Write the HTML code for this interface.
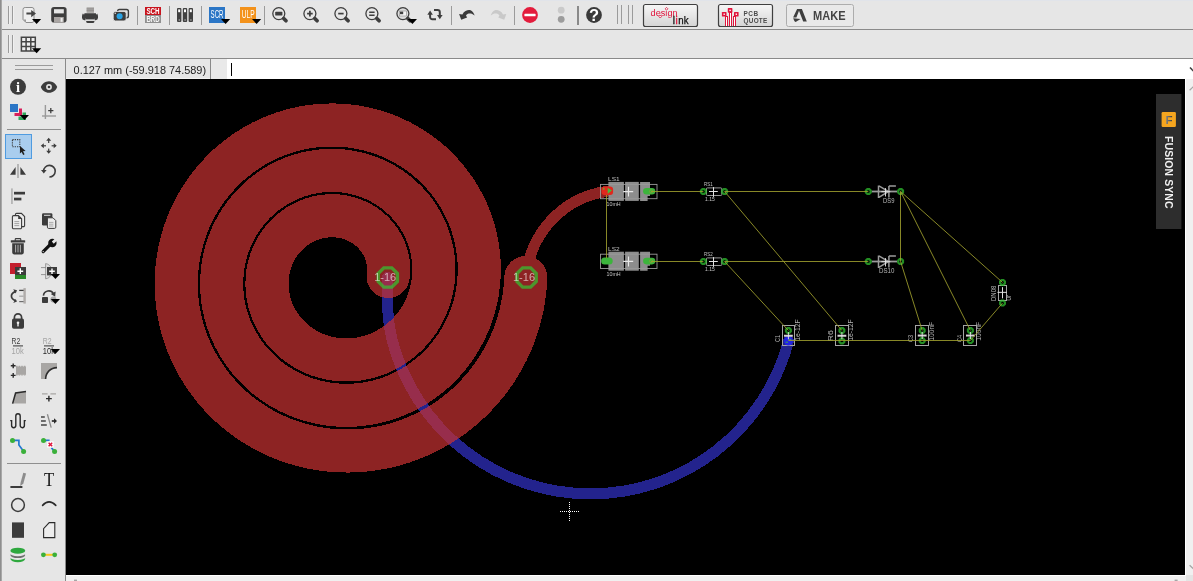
<!DOCTYPE html>
<html><head><meta charset="utf-8"><title>EAGLE Board</title>
<style>
html,body{margin:0;padding:0;}
body{width:1193px;height:581px;overflow:hidden;background:#e6e6e6;position:relative;font-family:"Liberation Sans",sans-serif;}
svg{position:absolute;left:0;top:0;}
text{font-family:"Liberation Sans",sans-serif;}
</style></head><body>
<svg width="1193" height="581" viewBox="0 0 1193 581">
<rect x="66" y="79" width="1119" height="496" fill="#000"/>
<g id="board" filter="url(#nolcd)">
<path d="M387.5,277.5 L387.5,300 C387.5,318 389.5,329.3 392.2,340 A204.7,204.7 0 0 0 788.5,341" fill="none" stroke="#23238d" stroke-width="11" stroke-linecap="round" stroke-linejoin="round" shape-rendering="crispEdges"/>
<g opacity="0.706" shape-rendering="crispEdges"><path d="M388.1,276.5 L388.4,273.9 L388.6,271.3 L388.6,268.7 L388.5,266.0 L388.3,263.3 L387.9,260.7 L387.3,258.0 L386.6,255.3 L385.8,252.7 L384.8,250.1 L383.7,247.5 L382.4,245.0 L381.0,242.6 L379.5,240.2 L377.8,237.8 L375.9,235.6 L374.0,233.4 L371.9,231.3 L369.7,229.4 L367.4,227.5 L365.0,225.7 L362.4,224.1 L359.8,222.6 L357.1,221.2 L354.2,220.0 L351.3,218.9 L348.4,218.0 L345.3,217.2 L342.2,216.6 L339.1,216.1 L335.9,215.8 L332.7,215.7 L329.5,215.7 L326.2,216.0 L323.0,216.4 L319.7,216.9 L316.5,217.7 L313.3,218.6 L310.1,219.7 L307.0,220.9 L303.9,222.4 L300.9,224.0 L298.0,225.7 L295.1,227.7 L292.4,229.8 L289.7,232.0 L287.2,234.4 L284.7,237.0 L282.4,239.7 L280.2,242.5 L278.2,245.5 L276.3,248.6 L274.6,251.7 L273.0,255.0 L271.6,258.4 L270.4,261.9 L269.4,265.5 L268.5,269.1 L267.8,272.8 L267.4,276.5 L267.1,280.3 L267.0,284.1 L267.1,287.9 L267.4,291.7 L268.0,295.6 L268.7,299.4 L269.6,303.2 L270.8,306.9 L272.1,310.6 L273.7,314.3 L275.4,317.8 L277.4,321.3 L279.5,324.8 L281.8,328.1 L284.3,331.3 L287.0,334.3 L289.9,337.3 L292.9,340.1 L296.1,342.7 L299.4,345.2 L302.9,347.5 L306.5,349.7 L310.3,351.6 L314.1,353.4 L318.1,355.0 L322.1,356.3 L326.3,357.5 L330.5,358.4 L334.8,359.1 L339.1,359.6 L343.5,359.9 L347.9,359.9 L352.3,359.7 L356.7,359.3 L361.1,358.6 L365.5,357.7 L369.8,356.6 L374.1,355.2 L378.4,353.6 L382.6,351.8 L386.6,349.7 L390.6,347.4 L394.5,344.9 L398.3,342.2 L401.9,339.3 L405.4,336.2 L408.7,332.9 L411.9,329.4 L414.9,325.7 L417.7,321.9 L420.3,317.9 L422.7,313.7 L424.8,309.4 L426.8,305.0 L428.5,300.5 L430.1,295.8 L431.3,291.1 L432.3,286.3 L433.1,281.4 L433.6,276.5 L433.8,271.5 L433.8,266.5 L433.6,261.5 L433.0,256.5 L432.2,251.6 L431.1,246.6 L429.8,241.7 L428.2,236.8 L426.3,232.0 L424.2,227.4 L421.9,222.8 L419.2,218.3 L416.4,213.9 L413.3,209.7 L409.9,205.7 L406.4,201.8 L402.6,198.1 L398.7,194.5 L394.5,191.2 L390.1,188.1 L385.6,185.2 L380.9,182.5 L376.1,180.1 L371.1,178.0 L366.0,176.1 L360.8,174.4 L355.5,173.1 L350.1,172.0 L344.6,171.1 L339.1,170.6 L333.5,170.4 L328.0,170.5 L322.4,170.8 L316.8,171.5 L311.2,172.4 L305.7,173.6 L300.2,175.2 L294.8,177.0 L289.5,179.1 L284.3,181.5 L279.2,184.2 L274.2,187.2 L269.4,190.4 L264.7,193.9 L260.2,197.6 L255.9,201.6 L251.8,205.8 L247.9,210.3 L244.3,214.9 L240.8,219.8 L237.7,224.8 L234.8,230.0 L232.1,235.4 L229.8,241.0 L227.7,246.6 L225.9,252.4 L224.4,258.3 L223.2,264.3 L222.4,270.4 L221.9,276.5 L221.6,282.7 L221.7,288.8 L222.2,295.0 L222.9,301.2 L224.0,307.3 L225.4,313.4 L227.2,319.5 L229.2,325.4 L231.6,331.3 L234.3,337.0 L237.3,342.6 L240.6,348.1 L244.1,353.4 L248.0,358.5 L252.2,363.4 L256.6,368.1 L261.3,372.6 L266.2,376.9 L271.3,380.9 L276.7,384.6 L282.3,388.1 L288.0,391.2 L294.0,394.1 L300.1,396.7 L306.3,398.9 L312.7,400.8 L319.2,402.4 L325.7,403.7 L332.4,404.6 L339.1,405.1 L345.9,405.3 L352.6,405.2 L359.4,404.7 L366.2,403.8 L372.9,402.6 L379.6,401.0 L386.1,399.1 L392.7,396.8 L399.0,394.1 L405.3,391.2 L411.4,387.9 L417.4,384.2 L423.1,380.3 L428.7,376.0 L434.1,371.5 L439.2,366.6 L444.1,361.5 L448.7,356.1 L453.0,350.5 L457.1,344.6 L460.8,338.5 L464.2,332.2 L467.3,325.7 L470.1,319.1 L472.5,312.2 L474.6,305.3 L476.3,298.2 L477.6,291.1 L478.5,283.8 L479.1,276.5 L479.3,269.2 L479.1,261.8 L478.5,254.4 L477.5,247.1 L476.2,239.8 L474.4,232.5 L472.3,225.4 L469.8,218.3 L466.9,211.4 L463.6,204.6 L460.0,198.0 L456.0,191.5 L451.7,185.3 L447.1,179.3 L442.1,173.5 L436.8,168.0 L431.3,162.7 L425.4,157.7 L419.3,153.0 L412.9,148.7 L406.3,144.7 L399.4,141.0 L392.4,137.7 L385.2,134.7 L377.8,132.1 L370.3,129.9 L362.6,128.1 L354.8,126.7 L347.0,125.7 L339.1,125.1 L331.2,125.0 L323.2,125.2 L315.2,125.9 L307.3,126.9 L299.4,128.5 L291.6,130.4 L283.9,132.7 L276.3,135.4 L268.8,138.6 L261.5,142.1 L254.4,146.0 L247.4,150.4 L240.7,155.0 L234.3,160.1 L228.0,165.4 L222.1,171.2 L216.5,177.2 L211.1,183.5 L206.1,190.1 L201.4,197.0 L197.1,204.2 L193.2,211.5 L189.6,219.1 L186.5,226.9 L183.7,234.9 L181.4,243.0 L179.5,251.2 L178.0,259.6 L177.0,268.0 L176.4,276.5 L176.2,285.0 L176.5,293.6 L177.2,302.1 L178.4,310.7 L180.1,319.1 L182.2,327.5 L184.7,335.8 L187.6,343.9 L191.0,351.9 L194.9,359.8 L199.1,367.4 L203.8,374.8 L208.8,382.0 L214.2,389.0 L220.0,395.6 L226.1,402.0 L232.6,408.0 L239.4,413.7 L246.5,419.0 L253.9,424.0 L261.6,428.6 L269.5,432.8 L277.7,436.6 L286.1,440.0 L294.6,442.9 L303.3,445.4 L312.2,447.5 L321.1,449.1 L330.2,450.2 L339.3,450.8 L348.5,451.0 L357.7,450.7 L366.9,449.9 L376.0,448.6 L385.1,446.9 L394.1,444.7 L403.0,442.0 L411.7,438.8 L420.3,435.2 L428.7,431.1 L436.9,426.6 L444.9,421.7 L452.6,416.3 L460.0,410.5 L467.1,404.4 L473.9,397.8 L480.4,390.9 L486.5,383.7 L492.2,376.1 L497.5,368.2 L502.4,360.0 L506.9,351.6 L510.9,343.0 L514.5,334.1 L517.6,325.0 L520.2,315.7 L522.4,306.3 L524.0,296.8 L525.2,287.2 L525.8,277.5" fill="none" stroke="#c83232" stroke-width="43.1" stroke-linecap="round" stroke-linejoin="round"/>
<path d="M526.3,277.5 A94,94 0 0 1 606.6,191.4" fill="none" stroke="#c83232" stroke-width="11" stroke-linecap="round"/></g>
<polygon points="397.40,281.48 391.78,287.10 383.82,287.10 378.20,281.48 378.20,273.52 383.82,267.90 391.78,267.90 397.40,273.52" fill="none" stroke="#32c832" stroke-opacity="0.706" stroke-width="3.4"/>
<text x="385.2" y="281.3" font-size="11.6" text-anchor="middle" textLength="22" lengthAdjust="spacingAndGlyphs" fill="#ffffff" fill-opacity="0.6">1-16</text>
<polygon points="536.20,281.48 530.58,287.10 522.62,287.10 517.00,281.48 517.00,273.52 522.62,267.90 530.58,267.90 536.20,273.52" fill="none" stroke="#32c832" stroke-opacity="0.706" stroke-width="3.4"/>
<text x="524.0" y="281.3" font-size="11.6" text-anchor="middle" textLength="22" lengthAdjust="spacingAndGlyphs" fill="#ffffff" fill-opacity="0.6">1-16</text>
<rect x="608.4" y="181.9" width="15.5" height="19" fill="#8d8d8d"/><rect x="625.1" y="181.9" width="13.7" height="19" fill="#8d8d8d"/><path d="M640.1,181.9 h9.9 v14 h-2.4 v5 h-7.5z" fill="#8d8d8d"/><rect x="600.5" y="184.4" width="56.5" height="14.3" fill="none" stroke="#9a9a9a" stroke-width="0.9"/><path d="M623.2,191.6 h10 M628.5,186.8 v9.8" stroke="#e8e8e8" stroke-width="1.1" fill="none"/><rect x="601.5" y="186.4" width="11.6" height="8.6" rx="3" fill="#e0281e"/><path d="M607.7,187.8 l4.2,2.8 l-4.2,3.2z" fill="#46b83c"/><rect x="602.9" y="187.8" width="1.6" height="2" fill="#7a9a2a"/><rect x="643.1" y="188.0" width="12.2" height="6.6" rx="3.3" fill="#3cb43c"/><circle cx="651.1" cy="191.4" r="1.6" fill="none" stroke="#8aa03a" stroke-width="0.7"/><text x="608.1" y="180.70000000000002" font-size="5.6" fill="#c0c0c0" textLength="11.6" lengthAdjust="spacingAndGlyphs">LS1</text><text x="606.5" y="206.4" font-size="5.4" fill="#c0c0c0" textLength="14.2" lengthAdjust="spacingAndGlyphs">10mH</text>
<rect x="608.4" y="251.7" width="15.5" height="19" fill="#8d8d8d"/><rect x="625.1" y="251.7" width="13.7" height="19" fill="#8d8d8d"/><path d="M640.1,251.7 h9.9 v14 h-2.4 v5 h-7.5z" fill="#8d8d8d"/><rect x="600.5" y="254.2" width="56.5" height="14.3" fill="none" stroke="#9a9a9a" stroke-width="0.9"/><path d="M623.2,261.4 h10 M628.5,256.59999999999997 v9.8" stroke="#e8e8e8" stroke-width="1.1" fill="none"/><rect x="601.1" y="257.59999999999997" width="11.6" height="7" rx="3.5" fill="#3cb43c"/><rect x="643.1" y="257.8" width="12.2" height="6.6" rx="3.3" fill="#3cb43c"/><circle cx="651.1" cy="261.2" r="1.6" fill="none" stroke="#8aa03a" stroke-width="0.7"/><text x="608.1" y="250.5" font-size="5.6" fill="#c0c0c0" textLength="11.6" lengthAdjust="spacingAndGlyphs">LS2</text><text x="606.5" y="276.2" font-size="5.4" fill="#c0c0c0" textLength="14.2" lengthAdjust="spacingAndGlyphs">10mH</text>
<rect x="706.4" y="187.9" width="15.400000000000045" height="7.6" rx="1" fill="none" stroke="#a8a8a8" stroke-width="0.9"/><path d="M709.0,191.5 h8.8 M713.5,187.1 v9.8" stroke="#e0e0e0" stroke-width="1" fill="none"/><polygon points="705.80,192.49 704.39,193.90 702.41,193.90 701.00,192.49 701.00,190.51 702.41,189.10 704.39,189.10 705.80,190.51" fill="none" stroke="#32c832" stroke-opacity="0.706" stroke-width="2.2"/><polygon points="727.00,192.49 725.59,193.90 723.61,193.90 722.20,192.49 722.20,190.51 723.61,189.10 725.59,189.10 727.00,190.51" fill="none" stroke="#32c832" stroke-opacity="0.706" stroke-width="2.2"/><text x="704.0" y="185.9" font-size="5.2" fill="#c4c4c4" textLength="8.6" lengthAdjust="spacingAndGlyphs">RS1</text><text x="705.0" y="201.2" font-size="5.2" fill="#c4c4c4" textLength="9.8" lengthAdjust="spacingAndGlyphs">1.15</text>
<rect x="706.4" y="257.9" width="15.400000000000045" height="7.6" rx="1" fill="none" stroke="#a8a8a8" stroke-width="0.9"/><path d="M709.0,261.5 h8.8 M713.5,257.1 v9.8" stroke="#e0e0e0" stroke-width="1" fill="none"/><polygon points="705.80,262.49 704.39,263.90 702.41,263.90 701.00,262.49 701.00,260.51 702.41,259.10 704.39,259.10 705.80,260.51" fill="none" stroke="#32c832" stroke-opacity="0.706" stroke-width="2.2"/><polygon points="727.00,262.49 725.59,263.90 723.61,263.90 722.20,262.49 722.20,260.51 723.61,259.10 725.59,259.10 727.00,260.51" fill="none" stroke="#32c832" stroke-opacity="0.706" stroke-width="2.2"/><text x="704.0" y="255.9" font-size="5.2" fill="#c4c4c4" textLength="8.6" lengthAdjust="spacingAndGlyphs">RS2</text><text x="705.0" y="271.2" font-size="5.2" fill="#c4c4c4" textLength="9.8" lengthAdjust="spacingAndGlyphs">1.15</text>
<path d="M871.8,191.5 H897.1" stroke="#9a9a9a" stroke-width="1.8" fill="none"/><path d="M878.5,185.5 v12.4 M878.9,185.9 l9.6,5.6 l-9.6,5.8 M888.9,185.9 v11.6 M888.9,186.1 h7" stroke="#9a9a9a" stroke-width="1.5" fill="none"/><path d="M881.3,191.7 h9 M885.5,188.1 v8.4" stroke="#e8e8e8" stroke-width="0.9" fill="none"/><polygon points="870.70,192.49 869.29,193.90 867.31,193.90 865.90,192.49 865.90,190.51 867.31,189.10 869.29,189.10 870.70,190.51" fill="none" stroke="#32c832" stroke-opacity="0.706" stroke-width="2.2"/><polygon points="903.00,192.49 901.59,193.90 899.61,193.90 898.20,192.49 898.20,190.51 899.61,189.10 901.59,189.10 903.00,190.51" fill="none" stroke="#32c832" stroke-opacity="0.706" stroke-width="2.2"/><text x="894.4" y="203.2" font-size="7" fill="#b8b8b8" text-anchor="end" textLength="11.4" lengthAdjust="spacingAndGlyphs">DS9</text>
<path d="M871.8,261.5 H897.1" stroke="#9a9a9a" stroke-width="1.8" fill="none"/><path d="M878.5,255.5 v12.4 M878.9,255.9 l9.6,5.6 l-9.6,5.8 M888.9,255.9 v11.6 M888.9,256.1 h7" stroke="#9a9a9a" stroke-width="1.5" fill="none"/><path d="M881.3,261.7 h9 M885.5,258.1 v8.4" stroke="#e8e8e8" stroke-width="0.9" fill="none"/><polygon points="870.70,262.49 869.29,263.90 867.31,263.90 865.90,262.49 865.90,260.51 867.31,259.10 869.29,259.10 870.70,260.51" fill="none" stroke="#32c832" stroke-opacity="0.706" stroke-width="2.2"/><polygon points="903.00,262.49 901.59,263.90 899.61,263.90 898.20,262.49 898.20,260.51 899.61,259.10 901.59,259.10 903.00,260.51" fill="none" stroke="#32c832" stroke-opacity="0.706" stroke-width="2.2"/><text x="894.4" y="273.2" font-size="7" fill="#b8b8b8" text-anchor="end" textLength="15.4" lengthAdjust="spacingAndGlyphs">DS10</text>
<rect x="782.5" y="325.5" width="12" height="20.0" fill="none" stroke="#a4a4a4" stroke-width="1" shape-rendering="crispEdges"/><circle cx="788.4" cy="341" r="4.5" fill="#2222e6"/><path d="M785.6,342.2 h2.4 M788.8,339.6 h2.4" stroke="#3cb43c" stroke-width="0.9"/><polygon points="790.80,331.49 789.39,332.90 787.41,332.90 786.00,331.49 786.00,329.51 787.41,328.10 789.39,328.10 790.80,329.51" fill="none" stroke="#32c832" stroke-opacity="0.706" stroke-width="2.2"/><path d="M784.0,335.75 h8.8" stroke="#d4d4d4" stroke-width="2" fill="none"/><path d="M788.4,332.15 v7.2" stroke="#e8e8e8" stroke-width="0.9" fill="none"/><text transform="translate(780.2,342) rotate(-90)" font-size="6.6" fill="#b4b4b4" textLength="7" lengthAdjust="spacingAndGlyphs">C1</text><text transform="translate(800,340.8) rotate(-90)" font-size="6.6" fill="#b4b4b4" textLength="21.6" lengthAdjust="spacingAndGlyphs">1e-12F</text>
<rect x="835.5" y="325.5" width="13" height="20.0" fill="none" stroke="#a4a4a4" stroke-width="1" shape-rendering="crispEdges"/><polygon points="844.30,331.49 842.89,332.90 840.91,332.90 839.50,331.49 839.50,329.51 840.91,328.10 842.89,328.10 844.30,329.51" fill="none" stroke="#32c832" stroke-opacity="0.706" stroke-width="2.2"/><polygon points="844.30,341.99 842.89,343.40 840.91,343.40 839.50,341.99 839.50,340.01 840.91,338.60 842.89,338.60 844.30,340.01" fill="none" stroke="#32c832" stroke-opacity="0.706" stroke-width="2.2"/><path d="M837.5,335.75 h8.8" stroke="#d4d4d4" stroke-width="2" fill="none"/><path d="M841.9,332.15 v7.2" stroke="#e8e8e8" stroke-width="0.9" fill="none"/><text transform="translate(833.4,341.2) rotate(-90)" font-size="6.6" fill="#b4b4b4" textLength="11" lengthAdjust="spacingAndGlyphs">R6</text><text transform="translate(853.4,340.8) rotate(-90)" font-size="6.6" fill="#b4b4b4" textLength="21.6" lengthAdjust="spacingAndGlyphs">1e-12F</text>
<rect x="915.5" y="325.5" width="13" height="20.0" fill="none" stroke="#a4a4a4" stroke-width="1" shape-rendering="crispEdges"/><polygon points="924.60,331.49 923.19,332.90 921.21,332.90 919.80,331.49 919.80,329.51 921.21,328.10 923.19,328.10 924.60,329.51" fill="none" stroke="#32c832" stroke-opacity="0.706" stroke-width="2.2"/><polygon points="924.60,341.59 923.19,343.00 921.21,343.00 919.80,341.59 919.80,339.61 921.21,338.20 923.19,338.20 924.60,339.61" fill="none" stroke="#32c832" stroke-opacity="0.706" stroke-width="2.2"/><path d="M917.8000000000001,335.55 h8.8" stroke="#d4d4d4" stroke-width="2" fill="none"/><path d="M922.2,331.95 v7.2" stroke="#e8e8e8" stroke-width="0.9" fill="none"/><text transform="translate(913.2,342) rotate(-90)" font-size="6.6" fill="#b4b4b4" textLength="7" lengthAdjust="spacingAndGlyphs">C3</text><text transform="translate(933.8,340.8) rotate(-90)" font-size="6.6" fill="#b4b4b4" textLength="19" lengthAdjust="spacingAndGlyphs">100nF</text>
<rect x="963.5" y="325.5" width="13" height="20.0" fill="none" stroke="#a4a4a4" stroke-width="1" shape-rendering="crispEdges"/><polygon points="972.80,331.49 971.39,332.90 969.41,332.90 968.00,331.49 968.00,329.51 969.41,328.10 971.39,328.10 972.80,329.51" fill="none" stroke="#32c832" stroke-opacity="0.706" stroke-width="2.2"/><polygon points="972.80,341.59 971.39,343.00 969.41,343.00 968.00,341.59 968.00,339.61 969.41,338.20 971.39,338.20 972.80,339.61" fill="none" stroke="#32c832" stroke-opacity="0.706" stroke-width="2.2"/><path d="M966.0,335.55 h8.8" stroke="#d4d4d4" stroke-width="2" fill="none"/><path d="M970.4,331.95 v7.2" stroke="#e8e8e8" stroke-width="0.9" fill="none"/><text transform="translate(961.6,342) rotate(-90)" font-size="6.6" fill="#b4b4b4" textLength="7" lengthAdjust="spacingAndGlyphs">C4</text><text transform="translate(981.2,340.8) rotate(-90)" font-size="6.6" fill="#b4b4b4" textLength="19" lengthAdjust="spacingAndGlyphs">100nF</text>
<rect x="998.5" y="285.5" width="8" height="15.0" fill="none" stroke="#a4a4a4" stroke-width="1" shape-rendering="crispEdges"/><polygon points="1004.90,283.39 1003.49,284.80 1001.51,284.80 1000.10,283.39 1000.10,281.41 1001.51,280.00 1003.49,280.00 1004.90,281.41" fill="none" stroke="#32c832" stroke-opacity="0.706" stroke-width="2.2"/><polygon points="1004.90,304.09 1003.49,305.50 1001.51,305.50 1000.10,304.09 1000.10,302.11 1001.51,300.70 1003.49,300.70 1004.90,302.11" fill="none" stroke="#32c832" stroke-opacity="0.706" stroke-width="2.2"/><path d="M997.5,292.35 h9.4 M1002.5,287.15 v11.2" stroke="#e0e0e0" stroke-width="1" fill="none"/><text transform="translate(996.4,301) rotate(-90)" font-size="6.6" fill="#b4b4b4" textLength="15.4" lengthAdjust="spacingAndGlyphs">DN08</text><text transform="translate(1011.2,300.6) rotate(-90)" font-size="6.6" fill="#b4b4b4" textLength="5.7" lengthAdjust="spacingAndGlyphs">0r</text>
<g stroke="#a0a02e" stroke-width="0.9" fill="none" stroke-opacity="0.95">
<path d="M606.5,195 L606.5,258"/>
<path d="M651,191.5 L703.4,191.5"/>
<path d="M724.6,191.5 L868.3,191.5"/>
<path d="M651,261.5 L703.4,261.5"/>
<path d="M724.6,261.5 L868.3,261.5"/>
<path d="M724.6,191.5 L841.9,330.5"/>
<path d="M724.6,261.5 L788.4,330.5"/>
<path d="M900.5,191.5 L900.5,261.5"/>
<path d="M900.6,191.5 L970.4,330.5"/>
<path d="M900.6,191.5 L1002.5,282.4"/>
<path d="M900.6,261.5 L922.2,330.5"/>
<path d="M788.4,340.5 L970.4,340.5"/>
<path d="M970.4,340.5 L1002.5,303.1"/>
</g>
</g>
<g fill="#fff" shape-rendering="crispEdges"><rect x="560" y="511" width="1" height="1"/><rect x="562" y="511" width="1" height="1"/><rect x="564" y="511" width="1" height="1"/><rect x="566" y="511" width="1" height="1"/><rect x="568" y="511" width="1" height="1"/><rect x="570" y="511" width="1" height="1"/><rect x="572" y="511" width="1" height="1"/><rect x="574" y="511" width="1" height="1"/><rect x="576" y="511" width="1" height="1"/><rect x="578" y="511" width="1" height="1"/><rect x="569" y="502" width="1" height="1"/><rect x="569" y="504" width="1" height="1"/><rect x="569" y="506" width="1" height="1"/><rect x="569" y="508" width="1" height="1"/><rect x="569" y="510" width="1" height="1"/><rect x="569" y="512" width="1" height="1"/><rect x="569" y="514" width="1" height="1"/><rect x="569" y="516" width="1" height="1"/><rect x="569" y="518" width="1" height="1"/><rect x="569" y="520" width="1" height="1"/></g>
<defs><filter id="nolcd" x="0" y="0" width="100%" height="100%" filterUnits="userSpaceOnUse" primitiveUnits="userSpaceOnUse" color-interpolation-filters="sRGB"><feOffset dx="0" dy="0"/></filter></defs>
<!-- window chrome -->
<g id="chrome-lines" shape-rendering="crispEdges">
<rect x="0" y="0" width="1193" height="1" fill="#e1e4ea"/>
<rect x="0" y="0" width="1" height="581" fill="#8e8e8e"/><rect x="1" y="0" width="1" height="581" fill="#a8a8a8"/>
<rect x="2" y="29" width="1191" height="1" fill="#8a8a8a"/>
<rect x="2" y="58" width="1191" height="1" fill="#8a8a8a"/>
<rect x="65" y="59" width="1" height="522" fill="#8a8a8a"/>
<rect x="66" y="78" width="144" height="1" fill="#f2f2f2"/><rect x="211" y="78" width="982" height="1" fill="#ffffff"/>
<rect x="210" y="59" width="1" height="20" fill="#8a8a8a"/>
<rect x="211" y="59" width="16" height="20" fill="#e9e9e9"/>
<rect x="227" y="59" width="966" height="20" fill="#ffffff"/>
<rect x="231" y="63" width="1" height="13" fill="#000"/>
<!-- scrollbars -->
<rect x="1185" y="79" width="8" height="496" fill="#f0f0f0"/>
<rect x="66" y="575" width="1127" height="6" fill="#f0f0f0"/>
<rect x="66" y="575" width="1119" height="1" fill="#ffffff"/>
<rect x="1185" y="79" width="1" height="497" fill="#ffffff"/>
<rect x="1186" y="575" width="7" height="6" fill="#e4e4e4"/>
</g>
<text x="73.6" y="74.3" font-size="11.3" fill="#1e1e1e" textLength="132.5" lengthAdjust="spacingAndGlyphs" style="white-space:pre">0.127 mm (-59.918 74.589)</text>
<!-- top toolbar -->
<g id="top-toolbar" filter="url(#nolcd)">
<g fill="#9b9b9b">
<rect x="8" y="6" width="1" height="18"/><rect x="12" y="6" width="1" height="18"/>
<rect x="8" y="35" width="1" height="18"/><rect x="12" y="35" width="1" height="18"/>
<rect x="137" y="6" width="1" height="19"/><rect x="169" y="6" width="1" height="19"/><rect x="201" y="6" width="1" height="19"/><rect x="264" y="6" width="1" height="19"/>
<rect x="451" y="6" width="1" height="19"/><rect x="514" y="6" width="1" height="19"/>
<rect x="617" y="5" width="1" height="19"/><rect x="621" y="5" width="1" height="19"/><rect x="628" y="5" width="1" height="19"/><rect x="632" y="5" width="1" height="19"/>
</g>
<rect x="577" y="6" width="2" height="19" fill="#8a8a8a"/>
<g fill="#f4f4f4" opacity="0.7">
<rect x="9" y="6" width="1" height="18"/><rect x="13" y="6" width="1" height="18"/>
<rect x="9" y="35" width="1" height="18"/><rect x="13" y="35" width="1" height="18"/>
</g>
<!-- open / export -->
<path d="M25.2,7.5 h6.8 a2,2 0 0 1 2,2 v11 a2,2 0 0 1 -2,2 h-6 l-3,-3 v-10 a2,2 0 0 1 2,-2z" fill="#efefef" stroke="#8c8c8c" stroke-width="1"/>
<path d="M23,19.6 h3 v3z" fill="#9a9a9a"/>
<path d="M26.4,12.6 h4.8 v-2.6 l4.8,3.6 l-4.8,3.6 v-2.6 h-4.8z" fill="#454545"/>
<path d="M32,19 h9.2 l-4.6,5z" fill="#000"/>
<!-- save -->
<rect x="51.2" y="7" width="15.4" height="15.6" rx="2.8" fill="#3e3e3e"/>
<rect x="54" y="9.2" width="9.8" height="4.2" fill="#e6e6e6"/>
<path d="M54,17 h9.8 v5.6 h-9.8z" fill="#aaa6a4"/>
<rect x="60.6" y="18" width="2" height="3.8" fill="#eeeeee"/>
<!-- print -->
<rect x="86.6" y="7.3" width="7.4" height="5.6" fill="#aaa8a6"/>
<path d="M86.6,8.9 h7.4 M86.6,10.7 h7.4" stroke="#8a8886" stroke-width="0.8"/>
<rect x="82" y="13.3" width="16" height="6.9" rx="2.4" fill="#3e3e3e"/>
<rect x="83.2" y="12.9" width="1.2" height="1.4" fill="#e6e6e6"/><rect x="96" y="12.9" width="1.2" height="1.400" fill="#e6e6e6"/>
<rect x="85.4" y="18.2" width="9.4" height="2.6" fill="#e6e6e6"/>
<path d="M86.2,20.9 h8.2 v0.6 a1.6,1.6 0 0 1 -1.6,1.6 h-5 a1.6,1.6 0 0 1 -1.6,-1.600z" fill="#3e3e3e"/>
<rect x="85.4" y="17.4" width="9.400" height="2" fill="#3e3e3e"/>
<!-- camera -->
<rect x="117.6" y="9.500" width="10.800" height="8.200" rx="1.800" fill="none" stroke="#3e3e3e" stroke-width="1.400"/>
<rect x="113.200" y="11.400" width="13" height="9.600" rx="2.200" fill="#3e3e3e" stroke="#e6e6e6" stroke-width="0.900"/>
<circle cx="119.600" cy="16.200" r="3" fill="#29a3e4"/>
<rect x="114.600" y="12.600" width="1.300" height="1.300" fill="#e6e6e6"/>
<!-- SCH/BRD -->
<rect x="145" y="7" width="16" height="8" fill="#c8141e"/>
<rect x="145" y="15" width="16" height="8" fill="#909090"/>
<text x="153" y="14" font-size="8.600" font-weight="bold" fill="#fff" text-anchor="middle" textLength="13.200" lengthAdjust="spacingAndGlyphs">SCH</text>
<text x="153" y="22.200" font-size="8.600" font-weight="bold" fill="#f6f6f6" text-anchor="middle" textLength="13.200" lengthAdjust="spacingAndGlyphs">BRD</text>
<!-- library -->
<g fill="#414141">
<rect x="177" y="8" width="4.400" height="14" rx="1"/><rect x="182.800" y="8" width="4.400" height="14" rx="1"/><rect x="188.600" y="8" width="4.400" height="14" rx="1"/>
</g>
<g fill="#ffffff"><rect x="178.200" y="9.400" width="2" height="2.800"/><rect x="184" y="9.400" width="2" height="2.800"/><rect x="189.800" y="9.400" width="2" height="2.800"/>
<rect x="178.600" y="19.400" width="1.400" height="1.200" opacity="0.6"/><rect x="184.400" y="19.400" width="1.400" height="1.200" opacity="0.6"/><rect x="190.200" y="19.400" width="1.400" height="1.200" opacity="0.6"/></g>
<!-- SCR -->
<rect x="209" y="7" width="16" height="16" fill="#2b76c6"/>
<text x="217" y="18.200" font-size="10" fill="#fff" text-anchor="middle" textLength="12.800" lengthAdjust="spacingAndGlyphs">SCR</text>
<path d="M221,19 h9.200 l-4.600,5z" fill="#000"/>
<!-- ULP -->
<rect x="240" y="7" width="16" height="16" fill="#f3921b"/>
<text x="248.200" y="18.200" font-size="10" fill="#fff" text-anchor="middle" textLength="12.800" lengthAdjust="spacingAndGlyphs">ULP</text>
<path d="M252,19 h9.200 l-4.600,5z" fill="#000"/>
</g>
<g id="top-toolbar-2" filter="url(#nolcd)">
<!-- grid -->
<rect x="20.600" y="36.400" width="15" height="15" fill="#eeeeee"/>
<path d="M21.400,36.400 v15 M26.100,36.400 v15 M30.800,36.400 v15 M35.300,36.400 v15 M20.600,37.200 h15 M20.600,41.700 h15 M20.600,46.400 h15 M20.600,51 h15" stroke="#444" stroke-width="1.500" fill="none"/>
<path d="M32,48.200 h9.200 l-4.600,5z" fill="#000"/>
<!-- zoom icons -->
<g fill="none" stroke="#3e3e3e">
<circle cx="278.8" cy="13.6" r="6" stroke-width="1.3"/><path d="M283.7,18.5 l2.300,2.300" stroke-width="3.700" stroke-linecap="round"/>
<circle cx="309.9" cy="13.6" r="6" stroke-width="1.3"/><path d="M314.8,18.5 l2.300,2.300" stroke-width="3.700" stroke-linecap="round"/>
<circle cx="340.9" cy="13.6" r="6" stroke-width="1.3"/><path d="M345.8,18.5 l2.300,2.300" stroke-width="3.700" stroke-linecap="round"/>
<circle cx="371.9" cy="13.6" r="6" stroke-width="1.3"/><path d="M376.8,18.5 l2.300,2.300" stroke-width="3.700" stroke-linecap="round"/>
<circle cx="402.9" cy="13.6" r="6" fill="#dcdcdc" stroke-width="1.3"/><path d="M407.8,18.5 l2.300,2.300" stroke-width="3.700" stroke-linecap="round"/>
</g>
<rect x="275.200" y="11.800" width="7.200" height="3.800" rx="0.700" fill="#3e3e3e"/>
<path d="M307.100,13.600 h5.600 M309.900,10.800 v5.600" stroke="#3e3e3e" stroke-width="1.700" fill="none"/>
<path d="M338.200,13.600 h5.400" stroke="#3e3e3e" stroke-width="1.700" fill="none"/>
<path d="M369.200,12.200 h5.400 M369.200,15.200 h5.400" stroke="#3e3e3e" stroke-width="1.500" fill="none"/>
<rect x="399.400" y="11" width="7" height="5" fill="#f4f4f4" stroke="#8a8a8a" stroke-width="0.600"/>
<rect x="400" y="11.600" width="3.200" height="2.600" fill="#3e3e3e"/>
<path d="M407.800,19 h9.200 l-4.600,5z" fill="#000"/>
<!-- refresh -->
<g fill="none" stroke="#3e3e3e" stroke-width="2">
<path d="M436,19.300 h-3.700 a2.200,2.200 0 0 1 -2.200,-2.200 v-3.600"/>
<path d="M434,9.900 h3.600 a2.200,2.200 0 0 1 2.200,2.200 v3.600"/>
</g>
<path d="M427.300,14.700 h5.600 l-2.800,-4.200z" fill="#3e3e3e"/>
<path d="M437,15.100 h5.600 l-2.800,4.200z" fill="#3e3e3e"/>
<!-- undo -->
<path d="M461.2,19.8 L459.1,14.1 L462.4,14.4 C464,11.4 467,10.1 469,10.1 C472,10.1 473.6,12.6 474.7,15.6 C472.6,13.4 470.4,13.2 468.8,13.5 C467.6,13.8 466.6,14.6 466,15.4 L467.1,17.4 Z" fill="#3a3a3a"/>
<!-- redo (disabled) -->
<path d="M504.2,19.8 L506.3,14.1 L503.0,14.4 C501.4,11.4 498.4,10.1 496.4,10.1 C493.4,10.1 491.8,12.6 490.7,15.6 C492.8,13.4 495.0,13.2 496.6,13.5 C497.8,13.8 498.8,14.6 499.4,15.4 L498.3,17.4 Z" fill="#c9c9c9"/>
<!-- stop -->
<circle cx="530" cy="15" r="7.900" fill="#e31c3c"/>
<rect x="524.400" y="13.800" width="11.200" height="2.500" rx="0.600" fill="#fff"/>
<!-- go (disabled) -->
<circle cx="561.200" cy="10.200" r="3.400" fill="#cacaca"/>
<circle cx="561.200" cy="19.300" r="3.400" fill="#9c9c9c"/>
<!-- help -->
<circle cx="594" cy="15" r="7.900" fill="#3a3a3a"/>
<text x="594" y="21.200" font-size="16.500" font-weight="bold" fill="#fff" text-anchor="middle">?</text>
<!-- design link button -->
<defs>
<linearGradient id="btng" x1="0" y1="0" x2="0" y2="1"><stop offset="0" stop-color="#f6f6f6"/><stop offset="0.5" stop-color="#e6e6e6"/><stop offset="1" stop-color="#d4d4d4"/></linearGradient>
</defs>
<rect x="643.500" y="4.500" width="54" height="22" rx="2" fill="url(#btng)" stroke="#404040" stroke-width="1.200"/>
<text x="650.600" y="16.400" font-size="9.600" fill="#e0143c" textLength="27" lengthAdjust="spacingAndGlyphs">design</text>
<text x="672.8" y="24" font-size="10" fill="#111" stroke="#111" stroke-width="0.3">l</text><text x="675.6" y="24" font-size="10" fill="#e0143c" stroke="#e0143c" stroke-width="0.3">i</text><text x="678.3" y="24" font-size="10" fill="#111" stroke="#111" stroke-width="0.25" textLength="10.2" lengthAdjust="spacingAndGlyphs">nk</text>
<path d="M666.500,7.400 l1.400,1.400 l-1.400,1.400 l-1.400,-1.400z M660.200,15.200 l1.400,1.400 l-1.400,1.400 l-1.400,-1.400z" fill="#f6f6f6" stroke="#e0143c" stroke-width="0.800"/>
<!-- PCB quote button -->
<rect x="718.500" y="4.500" width="54" height="22" rx="2" fill="url(#btng)" stroke="#404040" stroke-width="1.200"/>
<g fill="#e0143c" shape-rendering="crispEdges"><rect x="725" y="16" width="3" height="10"/><rect x="729" y="12" width="3" height="14"/><rect x="733" y="16" width="3" height="10"/></g>
<g fill="#e0143c"><rect x="721.9" y="11.9" width="4.6" height="4.6" rx="0.6"/><rect x="727.8" y="8.1" width="4.6" height="4.6" rx="0.6"/><rect x="734" y="11.9" width="4.6" height="4.6" rx="0.6"/></g>
<g fill="#fff" shape-rendering="crispEdges"><rect x="726" y="17" width="1" height="9"/><rect x="730" y="13" width="1" height="13"/><rect x="734" y="17" width="1" height="9"/></g>
<g fill="#fff"><rect x="723.5" y="13.5" width="1.4" height="1.4"/><rect x="729.4" y="9.7" width="1.4" height="1.4"/><rect x="735.6" y="13.5" width="1.4" height="1.4"/></g>
<text x="743.600" y="15.600" font-size="6.400" font-weight="bold" fill="#4a4a4a" textLength="14.400" lengthAdjust="spacing">PCB</text>
<text x="743.600" y="22.800" font-size="6.400" font-weight="bold" fill="#4a4a4a" textLength="23.600" lengthAdjust="spacing">QUOTE</text>
<!-- MAKE button -->
<rect x="786.500" y="4.500" width="67" height="22" rx="2" fill="#e9e9e9" stroke="#adadad" stroke-width="1"/>
<path d="M797.1,8.9 L801.9,8.9 L806.8,21.6 L803.2,21.6 L799,10.8 L796.4,17.6 L793.1,17.6 Z" fill="#3e3e3e"/>
<path d="M793.2,18.3 L800.6,19.1 L795.6,21.9 L794.5,21.3 Z" fill="#3e3e3e"/>
<text x="813" y="20.200" font-size="13" font-weight="bold" fill="#444" textLength="32.500" lengthAdjust="spacingAndGlyphs">MAKE</text>
</g>
<g id="left-toolbar" filter="url(#nolcd)">
<rect x="15" y="65" width="38" height="1" fill="#9b9b9b"/><rect x="15" y="69" width="38" height="1" fill="#9b9b9b"/>
<rect x="7" y="129" width="54" height="1" fill="#8f8f8f"/>
<rect x="7" y="463" width="54" height="1" fill="#8f8f8f"/>
<!-- row 87: info, eye -->
<circle cx="18" cy="86.8" r="8" fill="#3c3c3c"/>
<text x="18" y="92.2" font-size="14.5" font-weight="bold" fill="#fff" text-anchor="middle" style="font-family:'Liberation Serif',serif">i</text>
<path d="M40.8,87 C41.8,84 45,81.2 49,81.2 C53,81.2 56.2,84 57.2,87 C56.2,90 53,92.8 49,92.8 C45,92.8 41.8,90 40.8,87z" fill="#3c3c3c"/>
<circle cx="49" cy="87" r="2.900" fill="#e6e6e6"/><circle cx="49" cy="87" r="1.300" fill="#3c3c3c"/>
<!-- row 112: layers, mark -->
<rect x="18.500" y="112.500" width="7.500" height="7.500" fill="#2ea85a"/>
<rect x="14" y="108" width="8.500" height="8.500" fill="#e6e6e6"/>
<rect x="14.500" y="108.500" width="7.500" height="7.500" fill="#d81e5a"/>
<rect x="10" y="104" width="9" height="9" fill="#e6e6e6"/>
<rect x="10" y="104" width="8" height="8" fill="#2b76c6"/>
<path d="M19.800,115 h9.200 l-4.600,5z" fill="#000"/>
<rect x="44.700" y="105" width="1.400" height="14" fill="#9a9a9a"/>
<rect x="42" y="115.300" width="14" height="1.400" fill="#9a9a9a"/>
<path d="M48.200,110.600 h5.200 M50.800,108 v5.200" stroke="#3c3c3c" stroke-width="1.300" fill="none"/>
<!-- row 146: select (active), move -->
<rect x="5.500" y="134.500" width="26" height="24" fill="#a9cdee" stroke="#4f9be0" stroke-width="1"/>
<rect x="12.400" y="139.600" width="7.400" height="7.200" fill="none" stroke="#3c3c3c" stroke-width="1.100" stroke-dasharray="1.300 1"/>
<path d="M20,146 l5.600,5 l-2.600,0.200 l1.600,3 l-1.400,0.700 l-1.600,-3 l-1.700,1.700z" fill="#1e1e1e"/>
<g fill="#3c3c3c">
<path d="M48.700,137.800 l2.500,3 h-5z M48.700,153.800 l2.500,-3 h-5z M40.800,145.800 l3,-2.500 v5z M56.700,145.800 l-3,-2.500 v5z"/>
<rect x="48.100" y="140" width="1.200" height="3"/><rect x="48.100" y="148.600" width="1.200" height="3"/><rect x="43" y="145.200" width="3" height="1.200"/><rect x="51.600" y="145.200" width="3" height="1.200"/>
</g>
<!-- row 171: mirror, rotate -->
<rect x="17.300" y="164" width="1.400" height="14" fill="#a2a2a2"/>
<path d="M15.600,167 v7.800 h-5.600z M20.400,167 v7.800 h5.600z" fill="#3c3c3c"/>
<path d="M43.600,171 a5.800,5.800 0 1 1 5.800,6" fill="none" stroke="#3c3c3c" stroke-width="1.600"/>
<path d="M41,170 h5.600 l-2.800,3.600z" fill="#3c3c3c"/>
<!-- row 196: align -->
<rect x="11.300" y="188.400" width="1.300" height="15.600" fill="#a2a2a2"/>
<rect x="14" y="191.800" width="11" height="2.700" fill="#3c3c3c"/>
<rect x="14" y="197.700" width="7.400" height="2.700" fill="#3c3c3c"/>
<!-- row 221: copy, paste -->
<path d="M16.6,213.4 h4.800 l3.200,3.200 v8.800 a1.200,1.200 0 0 1 -1.200,1.200 h-6.800 a1.200,1.200 0 0 1 -1.200,-1.200 v-10.800 a1.200,1.200 0 0 1 1.200,-1.200z" fill="#ececec" stroke="#3c3c3c" stroke-width="1.100"/>
<path d="M13.6,215.600 h4.800 l3.200,3.200 v8.800 a1.200,1.200 0 0 1 -1.200,1.200 h-6.800 a1.200,1.200 0 0 1 -1.200,-1.200 v-10.800 a1.200,1.200 0 0 1 1.200,-1.200z" fill="#ececec" stroke="#3c3c3c" stroke-width="1.100"/>
<path d="M18.200,215.600 v3.400 h3.400z" fill="#3c3c3c"/>
<path d="M14.400,221.600 h4.800 M14.400,223.600 h4.800 M14.400,225.600 h4.800" stroke="#9a9a9a" stroke-width="0.900"/>
<rect x="42" y="213.200" width="10.400" height="12.400" rx="1.400" fill="#3c3c3c"/>
<rect x="44" y="214.800" width="6.400" height="1" fill="#dcdcdc"/>
<path d="M48.600,217.800 h4.400 l2.800,2.800 v6.600 a1.200,1.200 0 0 1 -1.200,1.200 h-6 a1.200,1.200 0 0 1 -1.200,-1.200 v-8.200 a1.200,1.200 0 0 1 1.200,-1.200z" fill="#ececec" stroke="#3c3c3c" stroke-width="1"/>
<path d="M49,222.400 h4.400 M49,224.200 h4.400 M49,226 h4.400" stroke="#9a9a9a" stroke-width="0.800"/>
<!-- row 246: delete, wrench -->
<rect x="10.800" y="240.200" width="14.400" height="2.300" rx="0.600" fill="#3c3c3c"/>
<rect x="15.200" y="238.600" width="5.600" height="2.600" rx="0.800" fill="none" stroke="#3c3c3c" stroke-width="1.100"/>
<path d="M12.200,243.200 h11.600 v9.400 a1.800,1.800 0 0 1 -1.800,1.800 h-8 a1.800,1.800 0 0 1 -1.800,-1.800z" fill="#3c3c3c"/>
<path d="M15.600,244.800 v7.600 M18,244.800 v7.600 M20.400,244.800 v7.600" stroke="#b0b0b0" stroke-width="1"/>
<path d="M43.200,251.600 L50.400,244.400" stroke="#111" stroke-width="3.200" stroke-linecap="round" fill="none"/>
<circle cx="52.400" cy="243" r="4.200" fill="#111"/>
<path d="M52.800,242.600 L57.400,238.400" stroke="#e6e6e6" stroke-width="2.800" fill="none"/>
<circle cx="43.200" cy="251.600" r="0.700" fill="#e6e6e6"/>
<!-- row 271: add part, replace -->
<rect x="10" y="263" width="11" height="11" fill="#c4202e"/>
<rect x="15" y="267" width="11" height="8" fill="#3c3c3c"/>
<rect x="15" y="275" width="11" height="4" fill="#2a8a2a"/>
<path d="M17.400,271.200 h5.800 M20.300,268.300 v5.800" stroke="#fff" stroke-width="1.400" fill="none"/>
<path d="M45.600,263.600 c5,0.600 6.400,5.600 6.400,7.600 c0,2 -1.400,7 -6.400,7.600z" fill="#dcdcdc" stroke="#8a8a8a" stroke-width="0.800"/>
<path d="M41,267.600 h5 M41,274.600 h5" stroke="#8a8a8a" stroke-width="0.900"/>
<rect x="47" y="267" width="10" height="8.400" fill="#3c3c3c"/>
<path d="M49.200,271.200 h5.600 M52,268.400 v5.600" stroke="#fff" stroke-width="1.400" fill="none"/>
<path d="M50.800,274 h9.200 l-4.600,5z" fill="#000"/>
<!-- row 296: change pkg, replace2 -->
<rect x="23.4" y="288.1" width="2.4" height="15.5" fill="#b0acaa"/>
<path d="M19.2,296.2 h4.4" stroke="#a8a8a8" stroke-width="1.3"/>
<path d="M19.2,301.6 h4.4" stroke="#6e6e6e" stroke-width="1.2"/>
<path d="M19.2,290.4 h4.4" stroke="#3c3c3c" stroke-width="1.3"/>
<path d="M15.2,291.6 C10.2,293.6 10.2,298.6 15.2,300.6" fill="none" stroke="#3c3c3c" stroke-width="1.7"/>
<path d="M17,290.2 L13.2,289.2 L15.7,293.4z M17,301.6 L13.2,303 L15.7,299z" fill="#3c3c3c"/>
<path d="M43.4,295.6 a5.4,5.4 0 0 1 10,-2" fill="none" stroke="#3c3c3c" stroke-width="1.6"/>
<path d="M55.6,291.6 l-0.400,5.200 l-4.400,-2.800z" fill="#3c3c3c"/>
<rect x="42" y="297" width="6" height="6" rx="0.800" fill="#3c3c3c"/>
<circle cx="53.4" cy="299.4" r="3" fill="#a6a6a6"/>
<path d="M50.8,299 h9.200 l-4.600,5z" fill="#000"/>
<!-- row 321: lock -->
<path d="M14.400,319.600 v-2.200 a3.600,3.600 0 0 1 7.200,0 v2.200" fill="none" stroke="#3c3c3c" stroke-width="1.700"/>
<rect x="12" y="318.400" width="12" height="10.400" rx="1.800" fill="#3c3c3c"/>
<circle cx="18" cy="322.800" r="1.300" fill="#f0f0f0"/><rect x="17.300" y="322.800" width="1.400" height="3.600" fill="#f0f0f0"/>
<!-- row 346: name / value -->
<text x="11.6" y="343.6" font-size="8.2" fill="#3c3c3c" textLength="8.8" lengthAdjust="spacingAndGlyphs">R2</text>
<rect x="13" y="345.1" width="10" height="1.5" fill="#707070"/>
<text x="11.6" y="354" font-size="8.2" fill="#a4a4a4" textLength="12.2" lengthAdjust="spacingAndGlyphs">10k</text>
<text x="42.8" y="343.6" font-size="8.2" fill="#a4a4a4" textLength="8.8" lengthAdjust="spacingAndGlyphs">R2</text>
<rect x="44" y="345.1" width="10" height="1.5" fill="#707070"/>
<text x="42.8" y="354" font-size="8.2" fill="#1e1e1e" textLength="12.2" lengthAdjust="spacingAndGlyphs">10k</text>
<path d="M50.8,349 h9.2 l-4.6,5z" fill="#000"/>
<!-- row 371: smash, miter -->
<rect x="16" y="366.6" width="10" height="8.2" fill="#a8a6a4"/>
<path d="M16,366.4 h10 M16,375 h10" stroke="#a8a6a4" stroke-width="1.2" stroke-dasharray="1.6 1"/>
<path d="M10.8,365.8 h4.8 M13.2,363.4 v4.8 M10.8,375.4 h4.8 M13.2,373 v4.8" stroke="#2a2a2a" stroke-width="1.4" fill="none"/>
<path d="M41,363 h16 v4.6 a11.4,11.4 0 0 0 -11.4,11.4 h-4.6z" fill="#a8a6a4"/>
<path d="M45.6,379 a11.4,11.4 0 0 1 11.4,-11.4" fill="none" stroke="#2e2e2e" stroke-width="1.6"/>
<!-- row 396: split, meander -->
<path d="M12.600,403.600 l3,-10.600 l10.400,-1.600 v12.200z" fill="#a8a6a4"/>
<path d="M12.600,403.600 l3,-10.600 l10.400,-1.600" fill="none" stroke="#2a2a2a" stroke-width="1.500"/>
<path d="M42,393.800 h5.600 M50.400,393.800 h5.600" stroke="#a8a6a4" stroke-width="1.200"/>
<path d="M46,398.600 h5.800 M48.900,395.800 v5.800" stroke="#2a2a2a" stroke-width="1.400" fill="none"/>
<!-- row 421: meander, optimize -->
<path d="M10.2,420.6 h1.4 v5 a2,2 0 0 0 4.2,0 v-9.6 a2.2,2.2 0 0 1 4.4,0 v9.6 a2,2 0 0 0 4.2,0 v-5 h1.4" fill="none" stroke="#2a2a2a" stroke-width="1.4"/>
<path d="M41,416.900 h3.800 M41,421 h4.800 M41,425 h5.800" stroke="#444" stroke-width="1.500"/>
<path d="M47.4,414.200 l3.800,13.400" stroke="#8a8a8a" stroke-width="1.300"/>
<path d="M51.800,421 h3" stroke="#2a2a2a" stroke-width="1.700"/>
<path d="M54,418.200 l3,2.800 l-3,2.800z" fill="#2a2a2a"/>
<!-- row 446: route, ripup -->
<path d="M12.6,440.4 h6.3 v4.6 l4.8,6.4" fill="none" stroke="#2278d0" stroke-width="1.7"/>
<circle cx="12.5" cy="440.4" r="2.5" fill="#3ab03a"/><circle cx="23.6" cy="451.5" r="2.5" fill="#3ab03a"/>
<path d="M43.6,440.4 h6 M51.4,447.6 l3.200,4" fill="none" stroke="#2278d0" stroke-width="1.700"/>
<circle cx="43.5" cy="440.4" r="2.500" fill="#3ab03a"/><circle cx="54.6" cy="451.500" r="2.500" fill="#3ab03a"/>
<rect x="47.2" y="441.400" width="6.400" height="6.200" fill="#fff"/>
<path d="M48.6,442.700 l3.600,3.600 M52.200,442.700 l-3.600,3.600" stroke="#e0143c" stroke-width="1.500"/>
<!-- row 480: line, text -->
<path d="M10.4,487 h12" stroke="#111" stroke-width="1.600"/>
<path d="M20.200,485.900 L20.500,483 L23.300,472.700 L26.100,473.500 L23.300,483.800 Z" fill="#8c8c8c"/>
<text x="49.1" y="486.2" font-size="18" fill="#111" text-anchor="middle" textLength="10.2" lengthAdjust="spacingAndGlyphs" style="font-family:'Liberation Serif',serif">T</text>
<!-- row 505: circle, arc -->
<circle cx="18" cy="505" r="6.400" fill="none" stroke="#3c3c3c" stroke-width="1.500"/>
<path d="M42.600,505.400 q6.400,-7 13.200,0" fill="none" stroke="#2a2a2a" stroke-width="1.600" stroke-linecap="round"/>
<!-- row 530: rect, polygon -->
<rect x="12" y="522.400" width="12" height="15.400" fill="#3c3c3c"/>
<path d="M43.600,537.600 v-9 l5.600,-6 h5.600 v15z" fill="#ededed" stroke="#2a2a2a" stroke-width="1.100"/>
<!-- row 555: layers stack, ratsnest -->
<ellipse cx="17.800" cy="558.800" rx="7.400" ry="3.400" fill="#2ea83e"/>
<ellipse cx="17.800" cy="556.900" rx="8" ry="3.100" fill="#e6e6e6"/>
<ellipse cx="17.800" cy="554.900" rx="7.400" ry="3.200" fill="#6e6e6e"/>
<ellipse cx="17.800" cy="553.100" rx="8" ry="3.100" fill="#e6e6e6"/>
<ellipse cx="17.800" cy="550.700" rx="7.400" ry="3" fill="#2ea83e"/>
<path d="M43.600,554.800 h11" stroke="#f8c81e" stroke-width="2"/>
<circle cx="43.400" cy="554.800" r="2.400" fill="#3ab03a"/><circle cx="54.700" cy="554.800" r="2.400" fill="#3ab03a"/>
</g>
<g id="right" filter="url(#nolcd)">
<rect x="1156" y="94" width="25.400" height="135" fill="#2d2d2d"/>
<rect x="1161.600" y="112" width="14.300" height="15" rx="1.200" fill="#f5a51f"/>
<defs><linearGradient id="fg" x1="0" y1="0" x2="1" y2="0"><stop offset="0" stop-color="#8a8a8a"/><stop offset="1" stop-color="#3c3c3c"/></linearGradient></defs>
<text x="1168.900" y="123.800" font-size="11.500" font-weight="bold" fill="url(#fg)" text-anchor="middle">F</text>
<text transform="translate(1164.900,136) rotate(90)" font-size="10.400" font-weight="bold" fill="#f2f2f2" textLength="72.500" lengthAdjust="spacing">FUSION SYNC</text>
<path d="M1190,67.400 l3.400,3.600" stroke="#3c3c3c" stroke-width="1.500" fill="none"/>
<path d="M1189.600,90.200 l3.800,-3.600" stroke="#a6a6a6" stroke-width="1.300" fill="none"/>
<path d="M1189.600,565.200 l3.800,3.600" stroke="#a6a6a6" stroke-width="1.300" fill="none"/>
<rect x="74" y="579.600" width="3" height="1.400" fill="#a6a6a6"/>
<rect x="1174.600" y="579.600" width="3" height="1.400" fill="#a6a6a6"/>
</g>

</svg>
</body></html>
